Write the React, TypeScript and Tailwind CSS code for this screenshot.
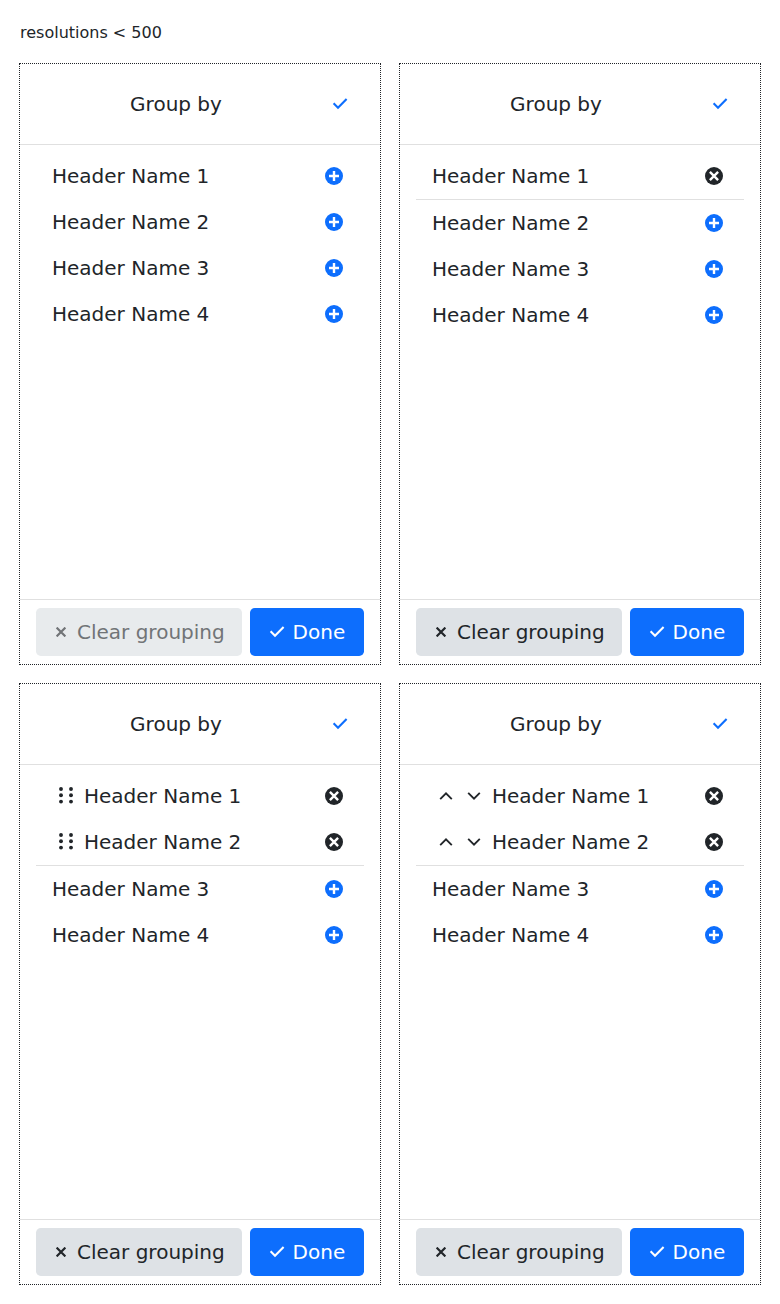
import React from 'react';

type Handle = 'none' | 'drag' | 'arrows';
interface PanelProps {
  selected: number;
  handle?: Handle;
}

const names = ['Header Name 1', 'Header Name 2', 'Header Name 3', 'Header Name 4'];

function Check() {
  return (
    <svg width="16" height="16" viewBox="0 0 16 16" fill="none" stroke="currentColor" strokeWidth="2.1">
      <path d="M1.6 7.3 6 11.7 14.6 3.1" />
    </svg>
  );
}

function Cross() {
  return (
    <svg width="10" height="10" viewBox="0 0 10 10" fill="none" stroke="currentColor" strokeWidth="2.2">
      <path d="M.6.6 9.4 9.4M9.4.6.6 9.4" />
    </svg>
  );
}

function Grip() {
  return (
    <svg width="16" height="18" viewBox="0 0 16 18" fill="currentColor">
      {[3, 13].map((x) => [2, 8.2, 14.6].map((y) => <circle key={`${x}-${y}`} cx={x} cy={y} r="1.95" />))}
    </svg>
  );
}

function Chevron({ up }: { up?: boolean }) {
  return (
    <svg width="14" height="8" viewBox="0 0 14 8" fill="none" stroke="currentColor" strokeWidth="1.9">
      <path d={up ? 'M1.2 7.1 7 1.4 12.8 7.1' : 'M1.2 .9 7 6.6 12.8 .9'} />
    </svg>
  );
}

function CircleIcon({ remove }: { remove: boolean }) {
  return (
    <svg width="18" height="18" viewBox="0 0 18 18">
      <circle cx="9" cy="9" r="9" fill="currentColor" />
      <path
        d={remove ? 'M4.9 4.9 13.1 13.1M13.1 4.9 4.9 13.1' : 'M9 4V14M4 9H14'}
        fill="none"
        stroke="#fff"
        strokeWidth="2.4"
      />
    </svg>
  );
}

function Panel({ selected, handle = 'none' }: PanelProps) {
  return (
    <section className="flex h-[600px] w-[360px] flex-col text-xl leading-[30px] outline-1 outline-dotted outline-[#212529]">
      <header className="flex h-[81px] shrink-0 items-center border-b border-[#e0e0e0] pr-8">
        <h2 className="w-[312px] text-center">Group by</h2>
        <button className="shrink-0 text-[#0d6efd]"><Check /></button>
      </header>
      <ul className="flex-1 px-4 pt-2">
        {names.map((name, i) => {
          const on = i < selected;
          return (
            <li
              key={name}
              className={`flex items-center px-4 py-2 ${i === selected - 1 ? 'border-b border-[#e0e0e0]' : ''}`}
            >
              {on && handle === 'drag' && <span className="mr-2.5 ml-1.5"><Grip /></span>}
              {on && handle === 'arrows' && (
                <span className="mr-[11px] ml-[7px] flex gap-3.5"><Chevron up /><Chevron /></span>
              )}
              <span className="flex-1">{name}</span>
              <span className={`mr-[5px] ${on ? 'text-[#212529]' : 'text-[#0d6efd]'}`}>
                <CircleIcon remove={on} />
              </span>
            </li>
          );
        })}
      </ul>
      <footer className="flex h-[65px] shrink-0 gap-2 border-t border-[#e0e0e0] px-4 pt-2">
        <button
          disabled={selected === 0}
          className={`flex h-12 w-[206px] items-center gap-[11px] rounded-[4.8px] pl-5 ${
            selected === 0 ? 'bg-[#e8ebed] text-[#717477]' : 'bg-[#dee2e6] text-[#212529]'
          }`}
        >
          <Cross />
          Clear grouping
        </button>
        <button className="flex h-12 w-[114px] items-center gap-[7.8px] rounded-[4.8px] bg-[#0d6efd] pl-[18.8px] text-white">
          <Check />
          Done
        </button>
      </footer>
    </section>
  );
}

export default function App() {
  return (
    <main className="min-h-screen bg-white px-5 pt-[21px] pb-5 font-['DejaVu_Sans',sans-serif] text-base leading-6 text-[#212529]">
      <p className="mb-[19px]">resolutions &lt; 500</p>
      <div className="grid grid-cols-[360px_360px] gap-5">
        <Panel selected={0} />
        <Panel selected={1} />
        <Panel selected={2} handle="drag" />
        <Panel selected={2} handle="arrows" />
      </div>
    </main>
  );
}
